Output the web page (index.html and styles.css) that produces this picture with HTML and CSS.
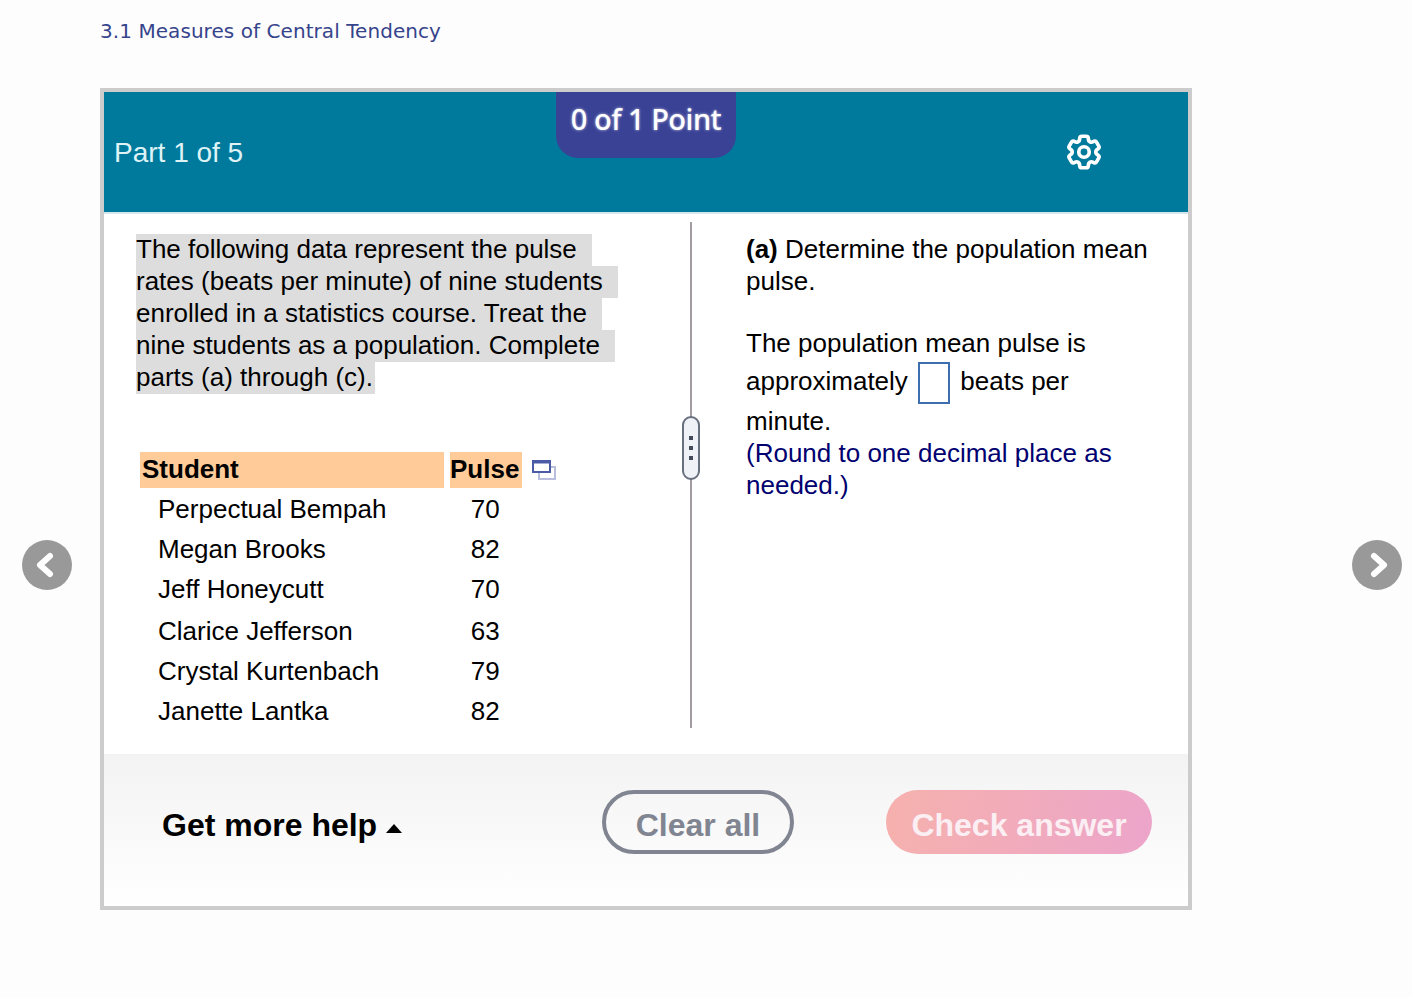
FILE: index.html
```html
<!DOCTYPE html>
<html lang="en">

<head>
    <meta charset="UTF-8">
    <title>3.1 Measures of Central Tendency</title>
    <link rel="stylesheet" href="styles.css">
</head>

<body>
    <h1 class="kapitel">3.1 Measures of Central Tendency</h1>

    <button class="pil venstre" aria-label="Previous">
        <svg viewBox="0 0 50 50" width="50" height="50">
            <path d="M28 16 L18 25 L28 34" />
        </svg>
    </button>
    <button class="pil hoejre" aria-label="Next">
        <svg viewBox="0 0 50 50" width="50" height="50">
            <path d="M22 16 L32 25 L22 34" />
        </svg>
    </button>

    <section class="kort">
        <header class="top">
            <p class="del">Part 1 of 5</p>
            <div class="point">0 of 1 Point</div>
            <svg class="gear" viewBox="0 0 24 24" width="42" height="42">
                <path d="M9.594 3.94c.09-.542.56-.94 1.11-.94h2.593c.55 0 1.02.398 1.11.94l.213 1.281c.063.374.313.686.645.87.074.04.147.083.22.127.324.196.72.257 1.075.124l1.217-.456a1.125 1.125 0 011.37.49l1.296 2.247a1.125 1.125 0 01-.26 1.431l-1.003.827c-.293.24-.438.613-.431.992a6.759 6.759 0 010 .255c-.007.378.138.75.43.99l1.005.828c.424.35.534.954.26 1.43l-1.298 2.247a1.125 1.125 0 01-1.369.491l-1.217-.456c-.355-.133-.75-.072-1.076.124a6.57 6.57 0 01-.22.128c-.331.183-.581.495-.644.869l-.213 1.28c-.09.543-.56.941-1.11.941h-2.594c-.55 0-1.02-.398-1.11-.94l-.213-1.281c-.062-.374-.312-.686-.644-.87a6.52 6.52 0 01-.22-.127c-.325-.196-.72-.257-1.076-.124l-1.217.456a1.125 1.125 0 01-1.369-.49l-1.297-2.247a1.125 1.125 0 01.26-1.431l1.004-.827c.292-.24.437-.613.43-.992a6.932 6.932 0 010-.255c.007-.378-.138-.75-.43-.99l-1.004-.828a1.125 1.125 0 01-.26-1.43l1.297-2.247a1.125 1.125 0 011.37-.491l1.216.456c.356.133.751.072 1.076-.124.072-.044.146-.087.22-.128.332-.183.582-.495.644-.869l.214-1.281z" />
                <circle cx="12" cy="12" r="3" />
            </svg>
        </header>

        <div class="indhold">
            <div class="venstrePanel">
                <p class="opgave">
                    <span class="markeret">The following data represent the pulse</span>
                    <span class="markeret">rates (beats per minute) of nine students</span>
                    <span class="markeret">enrolled in a statistics course. Treat the</span>
                    <span class="markeret">nine students as a population. Complete</span>
                    <span class="markeret sidste">parts (a) through (c).</span>
                </p>

                <div class="tabelRamme">
                    <table class="pulsTabel">
                        <thead>
                            <tr>
                                <th class="navn">Student</th>
                                <th class="puls">Pulse</th>
                            </tr>
                        </thead>
                        <tbody>
                            <tr><td class="navn">Perpectual Bempah</td><td class="puls">70</td></tr>
                            <tr><td class="navn">Megan Brooks</td><td class="puls">82</td></tr>
                            <tr><td class="navn">Jeff Honeycutt</td><td class="puls">70</td></tr>
                            <tr class="hoej"><td class="navn">Clarice Jefferson</td><td class="puls">63</td></tr>
                            <tr><td class="navn">Crystal Kurtenbach</td><td class="puls">79</td></tr>
                            <tr><td class="navn">Janette Lantka</td><td class="puls">82</td></tr>
                        </tbody>
                    </table>
                    <svg class="vinduer" viewBox="0 0 24 20" width="24" height="20">
                        <rect class="bag" x="7" y="7" width="16" height="12" />
                        <rect class="foran" x="1" y="1" width="17" height="11" />
                        <path class="foran" d="M1 2.5 H18" />
                    </svg>
                </div>
            </div>

            <div class="skille">
                <div class="greb"><span></span><span></span><span></span></div>
            </div>

            <div class="hoejrePanel">
                <p class="spoergsmaal"><b>(a)</b> Determine the population mean<br>pulse.</p>
                <p class="svar">The population mean pulse is<br>approximately <span class="felt"></span> beats per<br>minute.</p>
                <p class="hint">(Round to one decimal place as<br>needed.)</p>
            </div>
        </div>

        <footer class="bund">
            <div class="hjaelp">Get more help <span class="trekant"></span></div>
            <button class="ryd">Clear all</button>
            <button class="tjek">Check answer</button>
        </footer>
    </section>
</body>

</html>
```

FILE: styles.css
```css
body {
    margin: 0;
    height: 998px;
    overflow: hidden;
    position: relative;
    background-color: #fdfdfd;
    font-family: "Liberation Sans", Arial, sans-serif;
    color: #000;
}

.kapitel {
    margin: 0;
    padding: 19px 0 0 100px;
    height: 88px;
    box-sizing: border-box;
    font-family: "DejaVu Sans", Verdana, sans-serif;
    font-size: 20px;
    line-height: 24px;
    font-weight: normal;
    letter-spacing: .06px;
    color: #36448c;
}

.pil {
    position: absolute;
    top: 540px;
    width: 50px;
    height: 50px;
    padding: 0;
    border: none;
    border-radius: 50%;
    background-color: #999;
}

.pil svg {
    display: block;
}

.pil path {
    fill: none;
    stroke: #fff;
    stroke-width: 6;
    stroke-linecap: round;
    stroke-linejoin: round;
}

.venstre {
    left: 22px;
}

.hoejre {
    left: 1352px;
}

.kort {
    width: 1092px;
    height: 822px;
    margin-left: 100px;
    box-sizing: border-box;
    border: 4px solid #ccc;
    background-color: #fff;
    display: flex;
    flex-direction: column;
}

.top {
    height: 122px;
    box-sizing: border-box;
    flex: none;
    position: relative;
    display: flex;
    align-items: center;
    justify-content: space-between;
    padding: 0 83px 0 10px;
    background-color: #007a9c;
    border-bottom: 2px solid #d5e6ec;
}

.del {
    margin: 0;
    padding-top: 2px;
    font-size: 28px;
    color: #dff3f7;
}

.point {
    position: absolute;
    top: 0;
    left: 452px;
    width: 180px;
    height: 66px;
    box-sizing: border-box;
    padding-top: 7px;
    text-align: center;
    border-radius: 0 0 22px 22px;
    background-color: #3a4296;
    font-family: "Noto Sans", sans-serif;
    font-size: 29px;
    line-height: 40px;
    font-weight: 500;
    letter-spacing: -0.5px;
    color: #fff;
    text-shadow: 0 0 3px rgba(255, 255, 255, .7);
}

.gear {
    fill: none;
    stroke: #fff;
    stroke-width: 2.1;
}

.indhold {
    flex: 1;
    display: flex;
    padding: 8px 0 26px;
    min-height: 0;
    font-size: 26px;
    line-height: 32px;
}

.venstrePanel {
    width: 586px;
    flex: none;
    box-sizing: border-box;
    padding: 12px 0 0 32px;
}

.opgave {
    margin: 0;
}

.markeret {
    display: block;
    width: fit-content;
    padding: 0 15px 2px 0;
    line-height: 30px;
    background-color: #ddd;
}

.sidste {
    padding-right: 2px;
}

.tabelRamme {
    display: flex;
    align-items: flex-start;
    margin: 58px 0 0 4px;
}

.pulsTabel {
    border-collapse: separate;
    border-spacing: 6px 0;
    margin-left: -6px;
}

.pulsTabel th {
    height: 34px;
    padding: 0 0 2px;
    background-color: #fc9;
    text-align: left;
    font-weight: bold;
}

.pulsTabel td {
    height: 40px;
    padding: 2px 0 0;
    box-sizing: border-box;
}

.pulsTabel .hoej td {
    height: 42px;
    padding-top: 4px;
}

.pulsTabel th.navn {
    width: 302px;
    padding-left: 2px;
}

.pulsTabel td.navn {
    padding-left: 18px;
}

.pulsTabel .puls {
    width: 70px;
    padding-right: 2px;
    text-align: center;
}

.pulsTabel th.puls {
    width: 69px;
    padding-right: 3px;
}

.vinduer {
    margin: 8px 0 0 4px;
    fill: none;
    stroke-width: 2;
}

.vinduer .bag {
    stroke: #b9bedc;
}

.vinduer .foran {
    stroke: #4a5aa6;
    fill: #fff;
}

.skille {
    width: 2px;
    flex: none;
    position: relative;
    background-color: #a39da3;
}

.greb {
    position: absolute;
    top: 194px;
    left: -8px;
    width: 18px;
    height: 64px;
    box-sizing: border-box;
    border: 2px solid #68707f;
    border-radius: 9px;
    background-color: #eff2f6;
    display: flex;
    flex-direction: column;
    align-items: center;
    justify-content: center;
    gap: 6px;
}

.greb span {
    width: 4px;
    height: 4px;
    background-color: #444b58;
}

.hoejrePanel {
    flex: 1;
    padding: 11px 40px 0 54px;
}

.hoejrePanel p {
    margin: 0;
}

.spoergsmaal {
    padding-bottom: 30px;
}

.svar {
    line-height: 38px;
}

.felt {
    display: inline-block;
    width: 32px;
    height: 42px;
    margin: -3px 3px -2px;
    box-sizing: border-box;
    border: 2px solid #3d6fb0;
    background-color: #fff;
    vertical-align: middle;
}

.hint {
    color: #000070;
}

.hoejrePanel .spoergsmaal + .svar {
    margin-top: -3px;
}

.hoejrePanel .svar + .hint {
    margin-top: -3px;
}

.bund {
    height: 152px;
    flex: none;
    box-sizing: border-box;
    display: flex;
    align-items: flex-start;
    padding: 36px 36px 0 58px;
    background: linear-gradient(#f3f3f3, #fff);
}

.hjaelp {
    width: 440px;
    height: 64px;
    box-sizing: border-box;
    padding-top: 6px;
    display: flex;
    align-items: center;
    gap: 9px;
    font-size: 32px;
    font-weight: bold;
}

.trekant {
    width: 0;
    height: 0;
    margin-top: 6px;
    border-left: 8px solid transparent;
    border-right: 8px solid transparent;
    border-bottom: 9px solid #000;
}

.ryd,
.tjek {
    height: 64px;
    border-radius: 32px;
    font-family: inherit;
    font-size: 32px;
    font-weight: bold;
    padding: 6px 0 0;
}

.ryd {
    width: 192px;
    border: 4px solid #808591;
    background-color: transparent;
    color: #808591;
}

.tjek {
    width: 266px;
    margin-left: 92px;
    border: none;
    background: linear-gradient(100deg, #f6b1ad, #eca5ca);
    color: #fbeff4;
}
```
